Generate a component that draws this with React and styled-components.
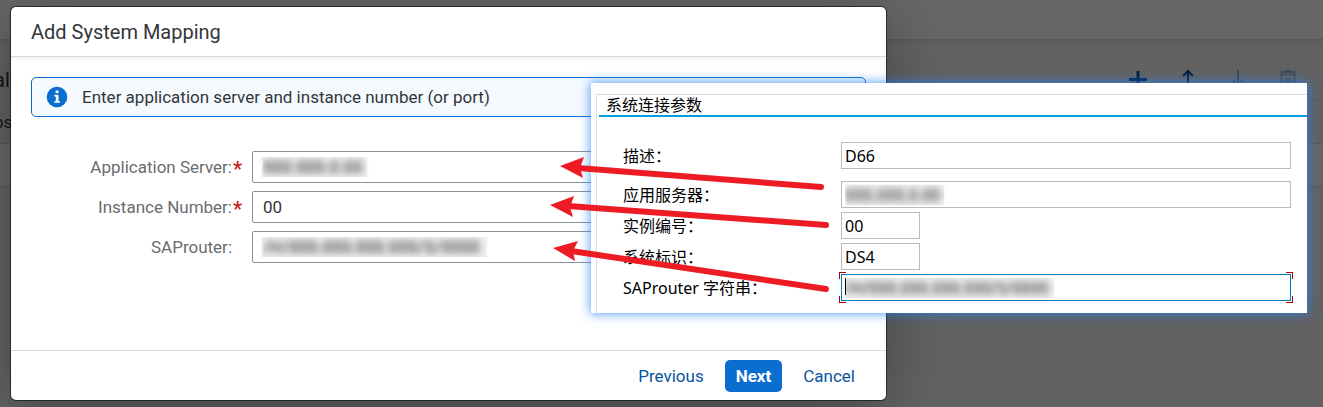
import styled, { createGlobalStyle, css } from "styled-components"

const GlobalStyle = createGlobalStyle`
  * {
    box-sizing: border-box;
  }
  body {
    margin: 0;
    font-family: Roboto, "Liberation Sans", sans-serif;
    font-size: 17px;
    color: #32363a;
    background: #666;
  }
  input, button {
    font: inherit;
    color: inherit;
  }
`

const Screen = styled.div`
  position: relative;
  min-height: 100vh;
  overflow: hidden;
  padding: 7px 0 7px 11px;
`

/* page behind the dialog */

const Page = styled.div`
  position: absolute;
  inset: 0;
  background: #f5f5f5;
`

const PageHeader = styled.div`
  height: 40px;
  background: #fff;
  border-bottom: 1px solid #d9d9d9;
  box-shadow: 0 1px 5px rgba(0, 0, 0, 0.12);
`

const Toolbar = styled.div`
  display: flex;
  align-items: center;
  justify-content: space-between;
  height: 61px;
  padding: 20px 24px 0 0;
  border-bottom: 1px solid #e0e0e0;
  font-size: 20px;
`

const PageText = styled.span`
  margin-left: -6px;
`

const Tools = styled.div`
  display: flex;
  gap: 28px;
`

const ToolButton = styled.button`
  display: flex;
  padding: 0;
  border: none;
  background: none;
  color: #0854a0;
  opacity: ${(props) => (props.disabled ? 0.4 : 1)};
`

const PageRow = styled.div`
  display: flex;
  align-items: center;
  height: 43px;
  background: ${(props) => props.$bg};
  border-bottom: 1px solid #d9d9d9;
`

const Overlay = styled.div`
  position: absolute;
  inset: 0;
  background: rgba(0, 0, 0, 0.6);
`

/* dialog */

const Dialog = styled.section`
  position: relative;
  display: flex;
  flex-direction: column;
  width: calc(100% - 437px);
  min-height: calc(100vh - 14px);
  background: #fff;
  border-radius: 5px;
  box-shadow: 0 0 0 1px rgba(0, 0, 0, 0.5), 0 12px 60px rgba(0, 0, 0, 0.3);
`

const DialogHeader = styled.header`
  display: flex;
  align-items: center;
  height: 50px;
  padding: 0 20px;
  border-bottom: 1px solid #d9d9d9;
  box-shadow: 0 1px 5px rgba(0, 0, 0, 0.08);
`

const Title = styled.h1`
  margin: 0;
  font-size: 20px;
  font-weight: 400;
`

const DialogBody = styled.div`
  flex: 1;
  padding: 20px;
`

const MessageStrip = styled.div`
  display: flex;
  align-items: center;
  gap: 14px;
  height: 40px;
  padding: 0 14px;
  background: #f5faff;
  border: 1px solid #0a6ed1;
  border-radius: 5px;
`

const Form = styled.form`
  display: flex;
  flex-direction: column;
  gap: 8px;
  margin-top: 34px;
`

const FormRow = styled.div`
  display: grid;
  grid-template-columns: 211px 1fr;
  column-gap: 10px;
  align-items: center;
`

const Label = styled.label`
  position: relative;
  padding-right: 10px;
  text-align: right;
  color: #6a6d70;
`

const Star = styled.span`
  position: absolute;
  right: 0;
  color: #c22;
  font-size: 20px;
  font-weight: 700;
`

const masked = css`
  color: transparent;
  text-shadow: 0 0 7px rgba(0, 0, 0, 0.9);
  background: linear-gradient(#eff0f0, #eff0f0) 8px 50% / ${(props) => props.$masked}px 20px no-repeat, #fff;
`

const Input = styled.input`
  width: 100%;
  height: 32px;
  padding: 0 10px;
  background: #fff;
  border: 1px solid #89919a;
  border-radius: 2px;
  outline: none;
  ${(props) => props.$masked && masked}
`

const DialogFooter = styled.footer`
  display: flex;
  align-items: center;
  justify-content: flex-end;
  gap: 10px;
  height: 50px;
  padding: 0 20px;
  border-top: 1px solid #d9d9d9;
`

const Button = styled.button`
  height: 32px;
  padding: 0 11px;
  border: none;
  border-radius: 5px;
  background: ${(props) => (props.$primary ? "#0a6ed1" : "transparent")};
  color: ${(props) => (props.$primary ? "#fff" : "#0854a0")};
  font-weight: ${(props) => (props.$primary ? 700 : 400)};
`

/* connection settings window */

const Panel = styled.section`
  position: absolute;
  top: 83px;
  left: 591px;
  right: 16px;
  padding: 11px 0 0 5px;
  background: #fff;
  box-shadow: 0 0 10px 1px rgba(40, 130, 245, 0.75);
  color: #000;
  font-family: "Noto Sans", "Noto Sans CJK SC", sans-serif;
  font-size: 16px;
`

const PanelFrame = styled.div`
  padding: 0 0 12px 2px;
  border-top: 1px solid #ddd;
  border-left: 1px solid #ddd;
`

const PanelTitle = styled.h2`
  height: 22px;
  margin: 0;
  padding-left: 7px;
  border-bottom: 2px solid #009de0;
  font-size: 16px;
  font-weight: 400;
  line-height: 20px;
`

const PanelForm = styled.form`
  display: flex;
  flex-direction: column;
  gap: 4px;
  padding: 25px 16px 0 24px;
`

const PanelRow = styled.div`
  display: grid;
  grid-template-columns: 218px 1fr;
  align-items: center;
  &:first-child {
    margin-bottom: 8px;
  }
`

const PanelLabel = styled.label`
  line-height: 20px;
`

const FieldBox = styled.div`
  position: relative;
  height: 27px;
`

const PanelInput = styled(Input)`
  display: block;
  width: ${(props) => (props.$short ? "79px" : "100%")};
  height: 27px;
  padding: 0 3px;
  border-color: ${(props) => (props.$focused ? "#007cc0" : "#bbb")};
  border-radius: 0;
  ${(props) => props.$masked && css`
    background-position: 4px 50%;
  `}
`

const Corner = styled.span`
  position: absolute;
  width: 7px;
  height: 7px;
  border: 0 solid #b00000;
  ${(props) => props.$v}: -2px;
  ${(props) => props.$h}: -2px;
  border-${(props) => props.$v}-width: 1px;
  border-${(props) => props.$h}-width: 1px;
`

const Caret = styled.span`
  position: absolute;
  top: 4px;
  left: 4px;
  width: 1px;
  height: 17px;
  background: #000;
`

const Arrows = styled.svg`
  position: absolute;
  top: 0;
  left: 0;
  pointer-events: none;
`

const arrows = [
  { head: "560,166 584,157 580,168 583,178", from: [578, 168], to: [821, 187] },
  { head: "550,205 574,196 570,207 573,217", from: [568, 206], to: [826, 225] },
  { head: "553,248 578,241 573,251 575,261", from: [571, 251], to: [826, 289] },
]

const fields = [
  { id: "server", label: "Application Server:", required: true, value: "000.000.0.00", masked: 106 },
  { id: "instance", label: "Instance Number:", required: true, value: "00" },
  { id: "router", label: "SAProuter:", value: "/H/000.000.000.000/S/0000", masked: 226 },
]

const settings = [
  { id: "desc", label: "描述：", value: "D66" },
  { id: "host", label: "应用服务器：", value: "000.000.0.00", masked: 98 },
  { id: "number", label: "实例编号：", value: "00", short: true },
  { id: "sid", label: "系统标识：", value: "DS4", short: true },
  { id: "string", label: "SAProuter 字符串：", value: "/H/000.000.000.000/S/0000", masked: 208, focused: true },
]

const InfoIcon = () => (
  <svg width="22" height="22" viewBox="0 0 22 22" aria-hidden="true">
    <circle cx="11" cy="11" r="10.3" fill="#0a6ed1" />
    <path d="M9.6 4.6h2.9v2.5H9.6zM8.3 8.8h4.2v6.4h1.5v1.6H8.2v-1.6h1.6v-4.8H8.3z" fill="#fff" />
  </svg>
)

const ToolIcon = ({ children }) => (
  <svg width="22" height="22" viewBox="0 0 22 22" fill="none" stroke="currentColor" strokeWidth="2" aria-hidden="true">
    {children}
  </svg>
)

const App = () => {
  return (
    <Screen>
      <GlobalStyle />
      <Page>
        <PageHeader />
        <Toolbar>
          <PageText>al</PageText>
          <Tools>
            <ToolButton aria-label="Add">
              <ToolIcon><path d="M11 2v18M2 10.5h18" strokeWidth="3" /></ToolIcon>
            </ToolButton>
            <ToolButton aria-label="Move up">
              <ToolIcon><path d="M11 2v17M6 7l5-5 5 5" /></ToolIcon>
            </ToolButton>
            <ToolButton aria-label="Move down" disabled>
              <ToolIcon><path d="M11 1v16M6 11l5 5 5-5" /></ToolIcon>
            </ToolButton>
            <ToolButton aria-label="Delete" disabled>
              <ToolIcon><path d="M2 3h18M8 1.5h6M3 5.5h16M4.5 6v14h13V6M8.5 9v9M11 9v9M13.5 9v9" strokeWidth="1.5" /></ToolIcon>
            </ToolButton>
          </Tools>
        </Toolbar>
        <PageRow $bg="#f2f2f2">
          <PageText>ps</PageText>
        </PageRow>
        <PageRow $bg="#fff" />
      </Page>
      <Overlay />

      <Dialog role="dialog">
        <DialogHeader>
          <Title>Add System Mapping</Title>
        </DialogHeader>
        <DialogBody>
          <MessageStrip>
            <InfoIcon />
            <span>Enter application server and instance number (or port)</span>
          </MessageStrip>
          <Form>
            {fields.map((field) => (
              <FormRow key={field.id}>
                <Label htmlFor={field.id}>
                  {field.label}
                  {field.required && <Star>*</Star>}
                </Label>
                <Input id={field.id} defaultValue={field.value} $masked={field.masked} />
              </FormRow>
            ))}
          </Form>
        </DialogBody>
        <DialogFooter>
          <Button>Previous</Button>
          <Button $primary>Next</Button>
          <Button>Cancel</Button>
        </DialogFooter>
      </Dialog>

      <Panel>
        <PanelFrame>
          <PanelTitle>系统连接参数</PanelTitle>
          <PanelForm>
            {settings.map((item) => (
              <PanelRow key={item.id}>
                <PanelLabel htmlFor={item.id}>{item.label}</PanelLabel>
                <FieldBox>
                  <PanelInput
                    id={item.id}
                    defaultValue={item.value}
                    $masked={item.masked}
                    $short={item.short}
                    $focused={item.focused}
                  />
                  {item.focused && (
                    <>
                      <Caret />
                      <Corner $v="top" $h="left" />
                      <Corner $v="top" $h="right" />
                      <Corner $v="bottom" $h="left" />
                      <Corner $v="bottom" $h="right" />
                    </>
                  )}
                </FieldBox>
              </PanelRow>
            ))}
          </PanelForm>
        </PanelFrame>
      </Panel>

      <Arrows width="840" height="310" viewBox="0 0 840 310" aria-hidden="true">
        {arrows.map((arrow) => (
          <g key={arrow.head} fill="#ed1c24" stroke="#ed1c24">
            <polygon points={arrow.head} stroke="none" />
            <line
              x1={arrow.from[0]}
              y1={arrow.from[1]}
              x2={arrow.to[0]}
              y2={arrow.to[1]}
              strokeWidth="6"
              strokeLinecap="round"
            />
          </g>
        ))}
      </Arrows>
    </Screen>
  )
}

export default App
